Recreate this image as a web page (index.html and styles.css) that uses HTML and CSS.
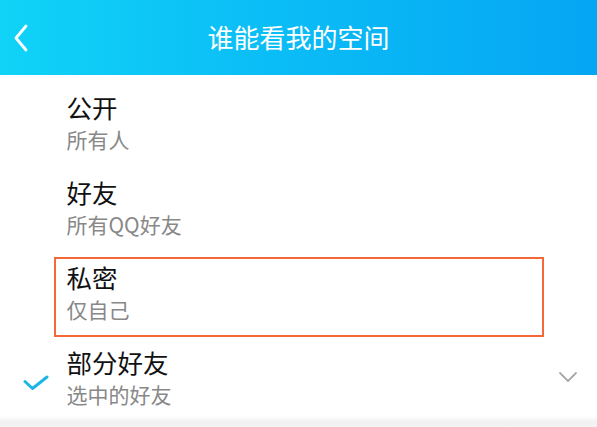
FILE: index.html
```html
<!DOCTYPE html>
<html lang="zh-CN">
<head>
<meta charset="utf-8">
<title>谁能看我的空间</title>
<link rel="stylesheet" href="styles.css">
</head>
<body>
<header class="topbar">
  <svg class="back" width="16" height="28" viewBox="0 0 16 28"><path d="M13 2 L3 14 L13 26" fill="none" stroke="#fff" stroke-width="2.8" stroke-linecap="round" stroke-linejoin="round"/></svg>
  <h1 class="title">谁能看我的空间</h1>
</header>
<main class="list">
  <div class="row">
    <div class="mark"></div>
    <div class="box"><div class="name">公开</div><div class="desc">所有人</div></div>
    <div class="extra"></div>
  </div>
  <div class="row">
    <div class="mark"></div>
    <div class="box"><div class="name">好友</div><div class="desc">所有QQ好友</div></div>
    <div class="extra"></div>
  </div>
  <div class="row">
    <div class="mark"></div>
    <div class="box box-hl"><div class="name">私密</div><div class="desc">仅自己</div></div>
    <div class="extra"></div>
  </div>
  <div class="row">
    <div class="mark"><svg width="26" height="16" viewBox="0 0 26 16"><path d="M2 6.5 L9.5 13.5 L24 2" fill="none" stroke="#1db5e8" stroke-width="3" stroke-linecap="round" stroke-linejoin="round"/></svg></div>
    <div class="box"><div class="name">部分好友</div><div class="desc">选中的好友</div></div>
    <div class="extra"><svg width="20" height="12" viewBox="0 0 20 12"><path d="M2 2 L10 10 L18 2" fill="none" stroke="#a9a9a9" stroke-width="1.8" stroke-linecap="round" stroke-linejoin="round"/></svg></div>
  </div>
</main>
</body>
</html>
```

FILE: styles.css
```css
html {
  background: linear-gradient(to bottom, #fff 0, #fff 416px, #f1f1f1 422px, #f3f3f3 427px);
  min-height: 100%;
}
body {
  margin: 0;
  font-family: "Noto Sans CJK SC", "Noto Sans", sans-serif;
  overflow: hidden;
}
.topbar {
  height: 75px;
  background: linear-gradient(to right, #10d3f7 0%, #0bbdf6 45%, #05a6f3 100%);
  display: flex;
  align-items: center;
  justify-content: center;
  position: relative;
}
.back {
  position: absolute;
  left: 13px;
  top: 24px;
}
.title {
  margin: 0;
  color: #fff;
  font-size: 26px;
  font-weight: 400;
  line-height: 1;
  padding-bottom: 2px;
}
.list {
  padding-top: 9px;
}
.row {
  display: grid;
  grid-template-columns: 54px 490px 1fr;
  height: 85px;
  align-items: start;
}
.box {
  margin-top: 3px;
  height: 80px;
  box-sizing: border-box;
  border: 2.5px solid transparent;
  padding: 1px 0 0 10.5px;
}
.box-hl {
  border-color: #f4693a;
}
.name {
  font-size: 25.5px;
  line-height: 33px;
  color: #111;
}
.desc {
  font-size: 21px;
  line-height: 28px;
  color: #888;
  margin-top: 2px;
}
.mark {
  padding: 33px 0 0 23px;
}
.extra {
  padding: 25px 0 0 14px;
}
```
